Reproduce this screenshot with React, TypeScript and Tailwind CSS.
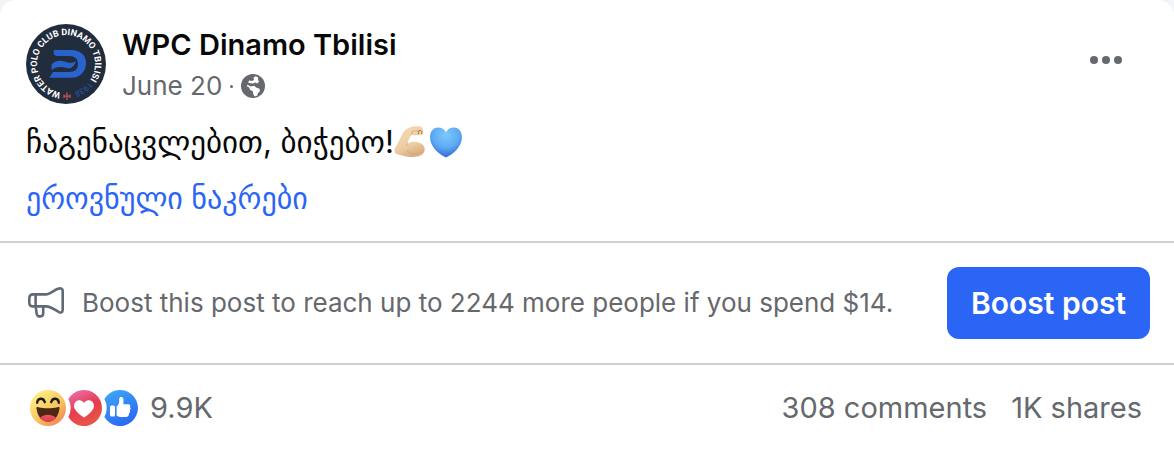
import React from "react";

function ClubLogo() {
  return (
    <svg viewBox="0 0 80 80" className="size-20 shrink-0" role="img" aria-label="WPC Dinamo Tbilisi">
      <defs>
        <path id="ring" d="M40 69A29 29 0 0 1 40 11A29 29 0 0 1 40 69" />
      </defs>
      <circle cx="40" cy="40" r="40" fill="#212d3d" />
      <text fill="#ffffff" fontFamily="Roboto, sans-serif" fontSize="9" fontWeight="700">
        <textPath href="#ring" startOffset="5">
          WATER POLO CLUB DINAMO TBILISI
          <tspan dx="2" fill="#2857ae" fontSize="8" fontWeight="400">
            1938
          </tspan>
        </textPath>
      </text>
      <path
        d="M28 26H45C54 26 60 31 60 39C60 48 54 53.7 45 53.7H23.3L27 48H43C49 48 52 45 52 40C52 35 49 32 43 32H31.5C28 32 27 29 28 26Z"
        fill="#2b63ce"
      />
      <path d="M27 39C32 35.5 36 36.5 40 38C44 39.5 47 39 50 37C48 43 45 45 41 44C36 43 31 42 26 46C25 43 25 41 27 39Z" fill="#2b63ce" />
      <path d="M41 68.5V76M38 70.5V74M44 70.5V74M37.5 72.2H44.5" stroke="#c4524b" strokeWidth="1.3" fill="none" />
    </svg>
  );
}

function Globe() {
  return (
    <svg viewBox="0 0 24 24" className="size-6" role="img" aria-label="Public">
      <circle cx="12" cy="12" r="12" fill="#65686c" />
      <path d="M14.6 2.2L17.2 3.6L17 6L18.2 7.6L16.2 9.4L14.4 8.4L12 9.6L9.4 9.2L7 8.4L8.2 6.6L11.2 7L13 5.8L12.4 3.8Z" fill="#ffffff" />
      <path d="M6.6 10.8L9.6 12.4L13.4 11.8L15 13.6L18.6 14.8L18.8 17.4L16.8 19.2L16.4 21.6L13.6 22.4L12.2 20L12 17.4L9 15.8L8.2 13.6L5.6 12Z" fill="#ffffff" />
    </svg>
  );
}

function FlexedArm() {
  return (
    <svg viewBox="0 0 32 34" className="h-[34px] w-8" role="img" aria-label="Flexed biceps">
      <defs>
        <linearGradient id="skin" x1="0" y1="0" x2="0.4" y2="1">
          <stop offset="0" stopColor="#f3d9b4" />
          <stop offset="0.7" stopColor="#eecda4" />
          <stop offset="1" stopColor="#dcb084" />
        </linearGradient>
      </defs>
      <path
        d="M15.5 2.6C18 1.4 22.6 .9 26.5 1.4C29 2 29.8 5.5 29.2 8.2C28.8 10 26 10.2 23.8 9.8C21.6 10.8 19.6 10.4 18.2 9.4C16 11.6 14 14.6 13.8 18.6C17.6 16 24 16.4 27.5 18.8C31 21.2 31.8 25.5 29.2 28.6C26.4 31.8 21.5 32.4 16.5 32C10.5 31.6 5.2 29.8 1.2 28.2C0 26.4 .4 24.6 1.5 22.5C3.4 19.2 5.8 14.6 8 9.7C9.6 6 12 4 15.5 2.6Z"
        fill="url(#skin)"
      />
      <path d="M12.2 20.8C12.6 19.8 13 19.2 13.8 18.6M13.4 26C17 29.4 23 29.6 28.8 26.8M18.2 9.4C17.6 8.6 17.5 7.6 18.1 6.7" stroke="#d3a679" strokeWidth="0.9" fill="none" strokeLinecap="round" />
      <path d="M23.8 9.6C25 8.8 25 7.3 23.8 6.2L26.5 5.4M27.8 9C28.2 7.8 27.7 6.4 26.5 5.4" stroke="#a97a52" strokeWidth="1" fill="none" strokeLinecap="round" />
      <path d="M18.4 6.6C20.2 5.6 22 5.4 23.8 6.2" stroke="#d3a679" strokeWidth="0.8" fill="none" strokeLinecap="round" />
    </svg>
  );
}

function BlueHeart() {
  return (
    <svg viewBox="0 0 32 31" className="h-[31px] w-8" role="img" aria-label="Blue heart">
      <defs>
        <radialGradient id="blueHeart" cx="0.5" cy="0.25" r="0.75">
          <stop offset="0" stopColor="#7cc8fc" />
          <stop offset="0.55" stopColor="#5fabf5" />
          <stop offset="1" stopColor="#2c68cf" />
        </radialGradient>
      </defs>
      <path
        d="M16 5.2C18 1.8 21 .4 24 .5C29 .7 32 4.8 31.9 10.4C31.8 18.6 25 26 16 30.6C7 26 .2 18.6 .1 10.4C0 4.8 3 .7 8 .5C11 .4 14 1.8 16 5.2Z"
        fill="url(#blueHeart)"
      />
    </svg>
  );
}

function Megaphone() {
  return (
    <svg viewBox="0 0 36 32" className="h-8 w-9 shrink-0" fill="none" stroke="#606a76" strokeWidth="2.6" strokeLinejoin="round" strokeLinecap="round" aria-hidden="true">
      <path d="M5 7.4H18C21.5 7.4 25.5 3.4 30 1.7Q34.7 .4 34.7 4V22.6Q34.7 27 30.5 24.8C26 22 22 19.4 18 19.4H5Q1.3 19.4 1.3 15.7V11.1Q1.3 7.4 5 7.4Z" />
      <path d="M7.6 7.4V19.4L8.8 27.3Q9.3 29.4 11.2 29.4H12.4Q15.2 29.4 15.2 26.6V19.4" />
    </svg>
  );
}

function Haha() {
  return (
    <svg viewBox="0 0 36 36" className="size-9" role="img" aria-label="Haha">
      <defs>
        <linearGradient id="haha" x1="0.15" y1="0.05" x2="0.85" y2="0.95">
          <stop offset="0" stopColor="#fff287" />
          <stop offset="0.6" stopColor="#f7c15d" />
          <stop offset="1" stopColor="#f08455" />
        </linearGradient>
        <linearGradient id="tongue" x1="0" y1="0" x2="0" y2="1">
          <stop offset="0" stopColor="#f0535c" />
          <stop offset="1" stopColor="#d92b48" />
        </linearGradient>
        <clipPath id="mouth">
          <path d="M6.5 18.6C6 17.4 7 16.8 8.4 17.2C14 18.5 22 18.5 27.6 17.2C29 16.8 30 17.4 29.5 18.6C28.4 26.8 24 31.8 18 31.8C12 31.8 7.6 26.8 6.5 18.6Z" />
        </clipPath>
      </defs>
      <circle cx="18" cy="18" r="18" fill="url(#haha)" />
      <g clipPath="url(#mouth)">
        <path d="M5 15H31V33H5Z" fill="#4b2812" />
        <ellipse cx="18" cy="30.5" rx="9" ry="5.8" fill="url(#tongue)" />
      </g>
      <path d="M7.2 12.8C7.5 7.8 13.5 7.2 14.8 12.2M21.2 12.2C22.5 7.2 28.5 7.8 28.8 12.8" stroke="#1c1c1d" strokeWidth="2.3" strokeLinecap="round" fill="none" />
    </svg>
  );
}

function Love() {
  return (
    <svg viewBox="0 0 36 36" className="size-9" role="img" aria-label="Love">
      <defs>
        <linearGradient id="love" x1="0.2" y1="0" x2="0.6" y2="1">
          <stop offset="0" stopColor="#ea6fae" />
          <stop offset="0.5" stopColor="#e63c4c" />
          <stop offset="1" stopColor="#e9574a" />
        </linearGradient>
      </defs>
      <path d="M2.4 9A18 18 0 1 1 2.4 27A19.8 19.8 0 0 0 2.4 9Z" fill="url(#love)" />
      <path d="M18 13C19.6 10.4 22 9.8 24.2 10.5C27.6 11.8 28.8 15.4 27.4 18.6C25.8 22 22.2 24.8 18 27.6C13.8 24.8 10.2 22 8.6 18.6C7.2 15.4 8.4 11.8 11.8 10.5C14 9.8 16.4 10.4 18 13Z" fill="#ffffff" />
    </svg>
  );
}

function Like() {
  return (
    <svg viewBox="0 0 36 36" className="size-9" role="img" aria-label="Like">
      <defs>
        <linearGradient id="like" x1="0.2" y1="0" x2="0.7" y2="1">
          <stop offset="0" stopColor="#3ea5f8" />
          <stop offset="1" stopColor="#2866f3" />
        </linearGradient>
      </defs>
      <path d="M2.4 9A18 18 0 1 1 2.4 27A19.8 19.8 0 0 0 2.4 9Z" fill="url(#like)" />
      <rect x="8" y="15.6" width="5" height="11" rx="1.5" fill="#ffffff" />
      <path d="M14.6 16.6C17.2 14.4 17.4 12 17.2 9.4C17.2 7.6 18 7 19 7C21.4 7 22 9.6 21.2 14.2H26.3C28.1 14.2 28.8 15.8 28 17.2C28.8 18 28.8 19.4 27.8 20.2C28.4 21.2 28 22.6 27 23.2C27.2 25.2 26.2 26.9 24 26.9H18.5C16.8 26.9 15.5 26.4 14.6 25.5Z" fill="#ffffff" />
    </svg>
  );
}

export default function App() {
  return (
    <div className="bg-[#f2f4f7]">
      <article className="rounded-t-2xl bg-white pb-6 font-['Inter','DejaVu_Sans',sans-serif] text-[#65686c]">
        <header className="flex items-start gap-4 px-[26px] pt-6">
          <a href="#page" className="shrink-0">
            <ClubLogo />
          </a>
          <div className="min-w-0 flex-1">
            <h2 className="text-[29px] leading-[42px] font-semibold text-[#080809]">
              <a href="#page">WPC Dinamo Tbilisi</a>
            </h2>
            <div className="flex items-center gap-2 text-[26px] leading-10">
              <a href="#post">June 20</a>
              <span aria-hidden="true" className="size-[3px] rounded-full bg-[#65686c]" />
              <Globe />
            </div>
          </div>
          <button type="button" aria-label="Actions for this post" className="mr-[26px] flex h-[72px] items-center gap-1">
            <span className="size-2 rounded-full bg-[#65686c]" />
            <span className="size-2 rounded-full bg-[#65686c]" />
            <span className="size-2 rounded-full bg-[#65686c]" />
          </button>
        </header>

        <div className="px-[26px] pt-4 pb-[23px] leading-10">
          <p className="mb-4 flex flex-wrap items-center text-[31px] text-[#080809]">
            <span>ჩაგენაცვლებით, ბიჭებო!</span>
            <span className="flex items-center gap-1">
              <FlexedArm />
              <BlueHeart />
            </span>
          </p>
          <p className="text-[30px]">
            <a href="#national-team" className="text-[#2b65f6]">
              ეროვნული ნაკრები
            </a>
          </p>
        </div>

        <section className="flex items-center gap-[18px] border-y-2 border-[#ced0d4] py-6 pr-6 pl-7">
          <Megaphone />
          <p className="min-w-0 flex-1 text-[26px] leading-8">Boost this post to reach up to 2244 more people if you spend $14.</p>
          <button type="button" className="shrink-0 rounded-xl bg-[#2b65f6] px-6 py-4 text-[30px] leading-10 font-semibold text-white">
            Boost post
          </button>
        </section>

        <footer className="flex items-center justify-between pt-[23px] pr-8 pl-[30px] text-[29px] leading-10">
          <button type="button" className="flex items-center">
            <Haha />
            <Love />
            <Like />
            <span className="ml-3">9.9K</span>
          </button>
          <div className="flex gap-6">
            <button type="button">308 comments</button>
            <button type="button">1K shares</button>
          </div>
        </footer>
      </article>
    </div>
  );
}
